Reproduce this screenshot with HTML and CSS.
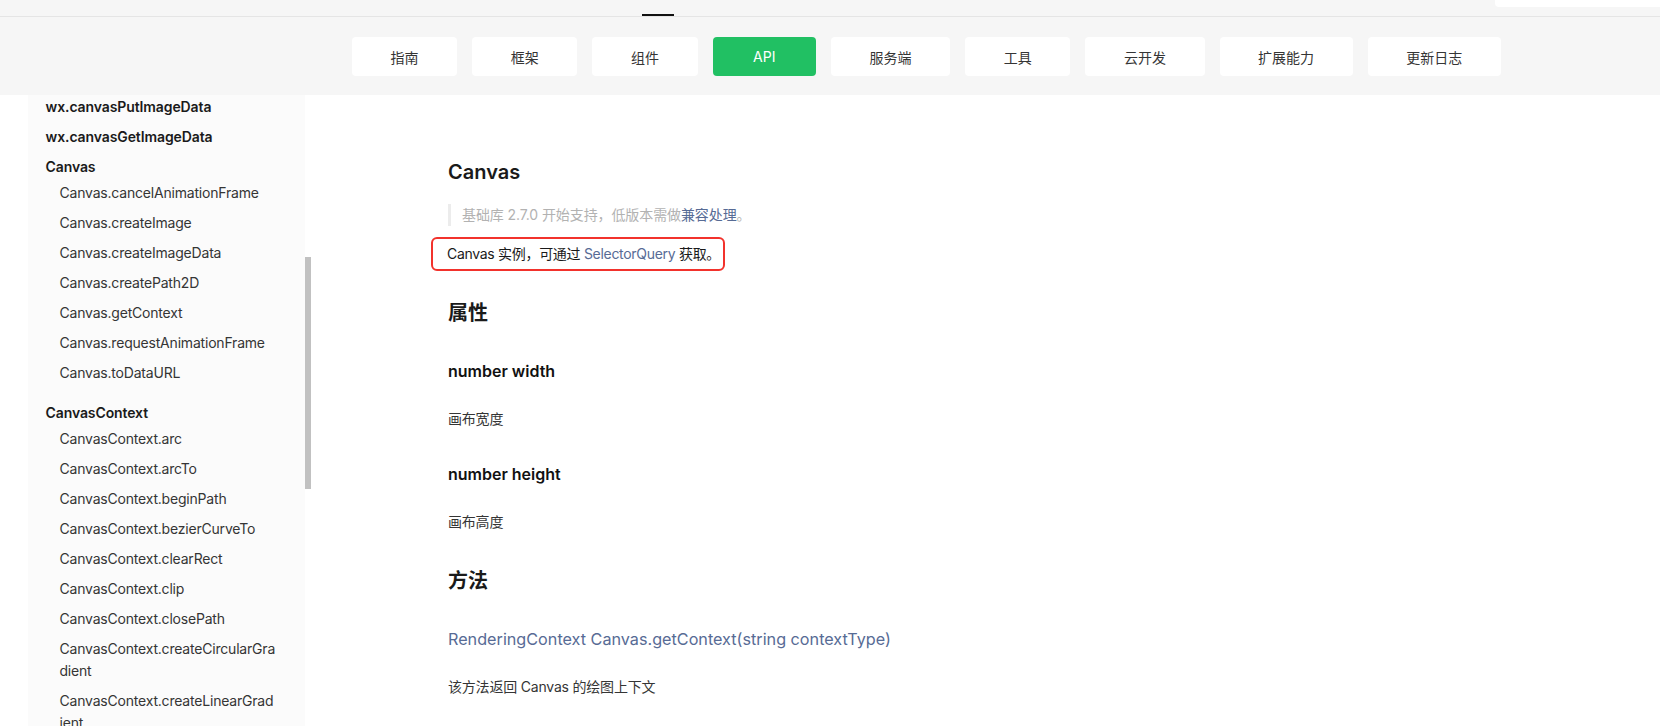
FILE: index.html
```html
<!DOCTYPE html>
<html>
<head>
  <meta charset="utf-8">
  <link rel="stylesheet" href="styles.css">
</head>
<body>
  <div class="header">
    <div class="topbar">
      <span class="topbar-mark"></span>
      <span class="topbar-search"></span>
    </div>
    <div class="nav">
      <a class="nav-item">指南</a>
      <a class="nav-item">框架</a>
      <a class="nav-item">组件</a>
      <a class="nav-item active">API</a>
      <a class="nav-item">服务端</a>
      <a class="nav-item">工具</a>
      <a class="nav-item">云开发</a>
      <a class="nav-item">扩展能力</a>
      <a class="nav-item">更新日志</a>
    </div>
  </div>

  <div class="page">
    <div class="sidebar">
      <ul class="menu">
        <li class="menu-title">wx.canvasPutImageData</li>
        <li class="menu-title">wx.canvasGetImageData</li>
        <li class="menu-group">
          <div class="menu-title group-title">Canvas</div>
          <ul class="submenu">
            <li>Canvas.cancelAnimationFrame</li>
            <li>Canvas.createImage</li>
            <li>Canvas.createImageData</li>
            <li>Canvas.createPath2D</li>
            <li>Canvas.getContext</li>
            <li>Canvas.requestAnimationFrame</li>
            <li>Canvas.toDataURL</li>
          </ul>
        </li>
        <li class="menu-group">
          <div class="menu-title group-title">CanvasContext</div>
          <ul class="submenu">
            <li>CanvasContext.arc</li>
            <li>CanvasContext.arcTo</li>
            <li>CanvasContext.beginPath</li>
            <li>CanvasContext.bezierCurveTo</li>
            <li>CanvasContext.clearRect</li>
            <li>CanvasContext.clip</li>
            <li>CanvasContext.closePath</li>
            <li>CanvasContext.createCircularGra<wbr>dient</li>
            <li>CanvasContext.createLinearGrad<wbr>ient</li>
            <li>CanvasContext.createPattern</li>
          </ul>
        </li>
      </ul>
    </div>
    <div class="scrollbar"><div class="scrollbar-thumb"></div></div>

    <div class="content">
      <h2 class="doc-title">Canvas</h2>
      <div class="tips">基础库 2.7.0 开始支持，低版本需做<a class="link">兼容处理</a>。</div>
      <p class="note">Canvas 实例，可通过 <a class="link">SelectorQuery</a> 获取。</p>

      <h3 class="section-title">属性</h3>
      <h4 class="item-title">number width</h4>
      <p class="item-desc">画布宽度</p>
      <h4 class="item-title">number height</h4>
      <p class="item-desc">画布高度</p>

      <h3 class="section-title methods">方法</h3>
      <h4 class="item-title link-title">RenderingContext Canvas.getContext(string contextType)</h4>
      <p class="item-desc">该方法返回 Canvas 的绘图上下文</p>
    </div>
  </div>
</body>
</html>
```

FILE: styles.css
```css
html, body {
  margin: 0;
  height: 100%;
  overflow: hidden;
}
body {
  font-family: Inter, "Noto Sans CJK SC", sans-serif;
  color: #353535;
  background: #fff;
}

/* header */
.header {
  background: #f6f6f6;
}
.topbar {
  display: flex;
  align-items: flex-start;
  height: 16px;
  border-bottom: 1px solid #e5e5e5;
  padding-left: 642px;
}
.topbar-mark {
  align-self: flex-end;
  width: 32px;
  height: 2px;
  background: #111;
}
.topbar-search {
  margin-left: auto;
  width: 165px;
  height: 7px;
  background: #fff;
  border-bottom-left-radius: 4px;
}
.nav {
  display: flex;
  gap: 15px;
  height: 78px;
  box-sizing: border-box;
  padding: 20px 0 0 352px;
}
.nav-item {
  display: flex;
  align-items: center;
  height: 39px;
  padding: 0 38.6px;
  background: #fff;
  border-radius: 4px;
  font-size: 14px;
  color: #353535;
}
.nav-item.active {
  padding: 0 40.5px;
  background: #21c063;
  color: #fff;
}

/* layout */
.page {
  display: flex;
  height: calc(100% - 95px);
}
.sidebar {
  width: 277px;
  margin-left: 28px;
  background: #fbfbfb;
  overflow: hidden;
}
.scrollbar {
  width: 6px;
}
.scrollbar-thumb {
  margin-top: 162px;
  height: 232px;
  background: #c1c1c1;
}

/* sidebar menu */
.menu, .submenu {
  list-style: none;
  margin: 0;
  padding: 0;
}
.menu {
  margin-top: -3px;
  padding-right: 18px;
}
.menu-title {
  padding: 4px 0 4px 17.5px;
  font-size: 14px;
  line-height: 22px;
  font-weight: 600;
  color: #1a1a1a;
  letter-spacing: -0.1px;
}
.group-title {
  padding-bottom: 0;
}
.menu-group + .menu-group {
  margin-top: 10px;
}
.submenu li {
  padding: 4px 0 4px 31.5px;
  font-size: 14px;
  line-height: 22px;
  color: #353535;
  letter-spacing: -0.2px;
  overflow-wrap: anywhere;
}

/* content */
.content {
  flex: 1;
  padding: 63px 0 0 137px;
}
.doc-title {
  margin: 0;
  font-size: 20px;
  line-height: 28px;
  font-weight: 600;
  color: #1a1a1a;
}
.tips {
  margin-top: 18px;
  padding-left: 11px;
  border-left: 3px solid #ececec;
  font-size: 14px;
  line-height: 22px;
  color: #b2b2b2;
  letter-spacing: -0.1px;
}
.link {
  color: #576b95;
}
.note {
  display: inline-block;
  margin: 11px 0 0 -17px;
  padding: 4px 3px 4px 14px;
  border: 2px solid #f2322c;
  border-radius: 6px;
  font-size: 14px;
  line-height: 22px;
  color: #1a1a1a;
  letter-spacing: -0.3px;
}
.section-title {
  margin: 28px 0 0;
  font-size: 20px;
  line-height: 28px;
  font-weight: 600;
  color: #1a1a1a;
}
.section-title.methods {
  margin-top: 34px;
}
.item-title {
  margin: 32px 0 0;
  font-size: 16px;
  line-height: 24px;
  font-weight: 600;
  color: #111;
}
.link-title {
  font-weight: 400;
  font-size: 16.2px;
  color: #576b95;
}
.item-desc {
  margin: 25px 0 0;
  font-size: 14px;
  line-height: 22px;
  color: #353535;
  letter-spacing: -0.2px;
}
```
